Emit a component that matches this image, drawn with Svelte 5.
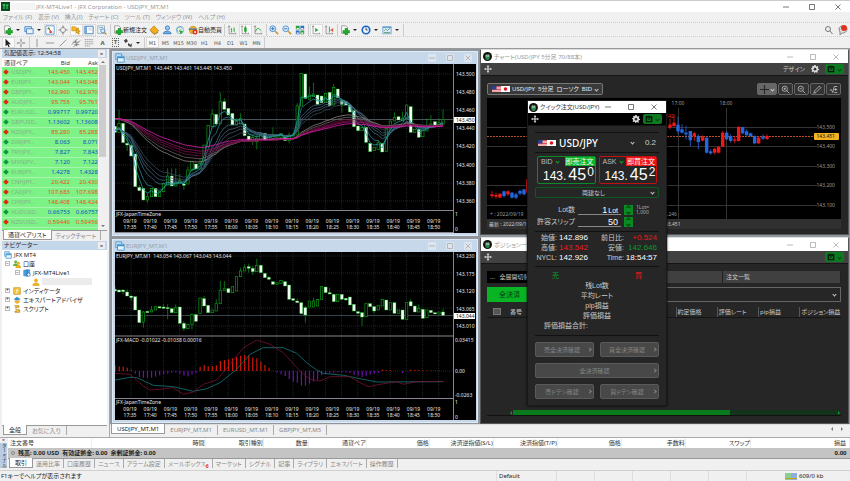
<script>
  const menus = ['ファイル (F)', '表示 (V)', '挿入(I)', 'チャート (C)', 'ツール (T)', 'ウィンドウ (W)', 'ヘルプ (H)'];

  const plus = '<path d="M6 4h3v2.500h2.500v3H9V12H6V9.500H3.500v-3H6z" fill="#1fae2c" stroke="#0c7a18" stroke-width=".5"/>';
  const page = '<path d="M2 1h5l2 2v7H2z" fill="#fff" stroke="#777" stroke-width=".8"/>';
  const axes = '<path d="M2.500 1v9.500H11M1.300 2.500l1.200-1.500 1.200 1.500M9.500 9.300l1.500 1.200" fill="none" stroke="#777" stroke-width=".8"/>';

  const icons = {
    newChart: page + plus,
    profiles: '<path d="M1 2h8v6H1z" fill="#cfe3f7" stroke="#3c7fc0"/><path d="M3 4.500h8v6H3z" fill="#e9f3fc" stroke="#3c7fc0"/>',
    market: '<path d="M1 1h10v10H1z" fill="#fff" stroke="#4a90d0"/><path d="M2.500 5l2-2.500L6.500 5z" fill="#2a9d3a"/><path d="M5 6l4 3.500H5.500z" fill="#e04020"/><path d="M4 4l4.500 4.500" stroke="#e04020"/>',
    dataWindow: '<circle cx="6" cy="6" r="3" fill="none" stroke="#888"/><path d="M6 .5v3M6 8.500v3M.5 6h3M8.500 6h3" stroke="#888" stroke-width="1.400"/>',
    navigator: '<path d="M1 2h4l1 1.500h3V7H1z" fill="#f5b921" stroke="#b97c08" stroke-width=".6"/><path d="M6 5l5 2.500-2 .5 1 2.500-1.500.5-1-2.500L6 10z" fill="#f5b921" stroke="#a06a00" stroke-width=".6"/>',
    terminal: '<path d="M1 1.500h10v9H1z" fill="#fff" stroke="#2b6cb5"/><path d="M1.500 2h2v8h-2z" fill="#5fa0e0"/><path d="M5 4h5M5 6h5" stroke="#bcd"/>',
    tester: '<path d="M1 1h8v9H1z" fill="#fff" stroke="#8aa"/><path d="M2.500 3h5M2.500 5h3" stroke="#7aa7d8"/><circle cx="7" cy="7" r="2.500" fill="#d6e9fa" stroke="#4a7fb5"/><path d="M9 9l2.300 2.300" stroke="#c08a30" stroke-width="1.500"/>',
    metaEditor: '<path d="M1 6l5-5 5.500 6L7 11z" fill="#f2b01e" stroke="#a86f06" stroke-width=".7"/><path d="M2 7.500l4.500 3.800L11 8.500" fill="none" stroke="#a87518"/>',
    community: '<circle cx="6.500" cy="3.500" r="2.500" fill="#9cc8f0" stroke="#2f78c0"/><path d="M1.500 10.500c0-4 9.500-4 9.500 0z" fill="#68aee8" stroke="#2f78c0"/>',
    signals: '<circle cx="6" cy="6" r="4.500" fill="#e4f4e4" stroke="#8cb4d0"/><path d="M3 8a3.500 3.500 0 0 1 6-4M5 8a2 2 0 0 1 3-2" fill="none" stroke="#5a9ac0"/><path d="M5 6.500l5 1-3 3.500z" fill="#2aa83a"/>',
    autoTrade: '<path d="M1.500 6c0-6 9-6 9 0L9 10H3z" fill="#f0b020" stroke="#a06a00" stroke-width=".6"/><path d="M1 5h10" stroke="#2f78c0" stroke-width="1.500"/><circle cx="8.500" cy="8.500" r="3" fill="#e03020"/><path d="M7.500 7.500h2v2h-2z" fill="#fff"/>',
    bars: axes + '<path d="M5.500 4v5M5.500 5h-1M8.500 3v5M8.500 7h1" stroke="#1a9a2a" fill="none"/>',
    candles: axes + '<path d="M5 3h3v5H5z" fill="#22b032"/><path d="M6.500 1v9" stroke="#1a9a2a"/>',
    line: axes + '<path d="M3 8c2-6 4-4 7-1" stroke="#1a9a2a" fill="none"/>',
    zoomIn: '<circle cx="4.500" cy="4.500" r="3.500" fill="#d8ecfb" stroke="#3c86cc"/><path d="M4.500 2.500v4M2.500 4.500h4" stroke="#2468b0"/><path d="M7.500 7.500l3.500 3.500" stroke="#c99a2a" stroke-width="2"/>',
    zoomOut: '<circle cx="4.500" cy="4.500" r="3.500" fill="#d8ecfb" stroke="#3c86cc"/><path d="M2.500 4.500h4" stroke="#2468b0"/><path d="M7.500 7.500l3.500 3.500" stroke="#c99a2a" stroke-width="2"/>',
    tile: '<path d="M1 1h4.500v4.500H1zM6.500 6.500H11V11H6.500z" fill="#2f9d3f"/><path d="M6.500 1H11v4.500H6.500zM1 6.500h4.500V11H1z" fill="#2f6fc0"/><path d="M2 3.500h2.500v1.500H2zM7.500 3.500H10v1.500H7.500zM2 9h2.500v1.500H2zM7.500 9H10v1.500H7.500z" fill="#fff"/>',
    scroll: axes + '<path d="M5 3.500l4 2.500-4 2.500z" fill="#22a832"/>',
    shift: axes + '<path d="M6.500 2v7" stroke="#666"/><path d="M11 3.500L7.500 6 11 8.500z" fill="#d06030"/>',
    indicators: page + plus,
    periods: '<circle cx="6" cy="6" r="4.500" fill="#eaf4ff" stroke="#1e66c8" stroke-width="2"/><path d="M6 3v3h2" stroke="#333" fill="none"/>',
    templates: '<path d="M1 2h10v8.500H1z" fill="#d8ecfb" stroke="#6a9fc8"/><path d="M1 3h10" stroke="#4a90d0"/><path d="M2.500 7l2-2 2 1.500L9.500 4M2.500 9h7" stroke="#5a9a5a" fill="none"/>',
    cursor: '<path d="M3 1v9l2.200-2 1.400 3 1.400-.7L6.500 7.500H9.500z" fill="#222"/>',
    cross: '<path d="M6 1v4M6 7v4M1 6h4M7 6h4" stroke="#666"/>',
    crossBold: '<path d="M6 0v12M0 6h12" stroke="#262626" stroke-width="1.500"/>',
    vline: '<path d="M6 1v10" stroke="#888"/>',
    hline: '<path d="M1 6h10" stroke="#888"/>',
    trend: '<path d="M2 10l8-8" stroke="#888"/>',
    channel: '<path d="M1 8l7-7M3 11l8-8M2 5h7M4 8h6M5 2l2 8" stroke="#666" stroke-width=".8"/>',
    fibo: '<path d="M1 2h10M1 4.500h10M1 7h10M1 9.500h6" stroke="#888" stroke-dasharray="1.500 .7"/>',
    arrows: '<path d="M1 3l3-2 2 3-3 2zM6 6l3 2 2-2-1 5-4-2z" fill="#444"/>',
    gear: '<path d="M5 0h2l.4 1.800 1.300.6L10.200 1.500l1 1.400-1 1.400.4 1.400L12 6v1.500l-1.700.4-.7 1.300.8 1.500-1.400.9-1.500-1-1 .4L6 12.500 5 12l-.4-1.600-1.300-.6-1.500.8-1-1.300 1-1.500L1.300 6.500 0 6V5l1.600-.6.6-1.200L1.500 2 3 1l1.300.9z" fill="#ddd"/><circle cx="6" cy="6.200" r="2" fill="#333"/>',
    move: '<path d="M6 0l2 2.500H6.800v2.700h2.700V4L12 6 9.500 8V6.800H6.800v2.700H8L6 12 4 9.500h1.200V6.800H2.500V8L0 6l2.500-2v1.200h2.700V2.500H4z" fill="#ddd"/>',
    cam: '<path d="M2 3h8v7H2z" fill="none" stroke="#031a08" stroke-width="2"/><path d="M3.500 2h5M4 6h4" stroke="#031a08" stroke-width="1.500"/>',
    lensPlus: '<circle cx="5" cy="5" r="3.500" fill="none" stroke="#ccc"/><path d="M5 3.500v3M3.500 5h3M7.500 7.500L11 11" stroke="#ccc"/>',
    lensMinus: '<circle cx="5" cy="5" r="3.500" fill="none" stroke="#ccc"/><path d="M3.500 5h3M7.500 7.500L11 11" stroke="#ccc"/>',
    pencil: '<path d="M1 11l1-3 6.500-6.500 2 2L4 10z" fill="none" stroke="#ccc"/>',
    wave: '<path d="M1 7l2-1 2 4 2-8h4M7 6h4M9 4v4M7 10h4" fill="none" stroke="#ccc"/>',
    globe: '<path d="M1 1h7v7H1z" fill="#cfe6f8" stroke="#3a8fd0"/><path d="M3 4h8v7H3z" fill="#e6f3fc" stroke="#3a8fd0"/><path d="M3 5.500h8" stroke="#3a8fd0" stroke-width="1.500"/>',
    people: '<circle cx="4" cy="3" r="2.200" fill="#5cb83a"/><path d="M0 9c0-5 7-5 8 0z" fill="#5cb83a"/><circle cx="8" cy="5" r="2.200" fill="#f2b01e"/><path d="M4 12c0-6 8-6 8 0z" fill="#f2b01e" stroke="#b97c08" stroke-width=".4"/>',
    server: '<path d="M1 2l5-1v10l-5-1zM6 1h4v8l-4 2z" fill="#4a9fe0" stroke="#1e66a8" stroke-width=".6"/><circle cx="8.500" cy="8.500" r="2.500" fill="#eaf4ff" stroke="#1e66a8"/>',
    user: '<circle cx="6" cy="3.500" r="2.800" fill="#f2b01e"/><path d="M1 11.500c0-6 10-6 10 0z" fill="#f2b01e" stroke="#b97c08" stroke-width=".4"/>',
    func: '<path d="M1 1h10v10H1z" fill="#f5c33a" stroke="#b97c08" stroke-width=".8"/><path d="M8 3c-3-1-2 3-2 6H4M4.500 5.500h3.500" stroke="#fff" fill="none"/>',
    hat: '<path d="M1 5l5-4 5.500 4L6 7z" fill="#3a8fd0"/><path d="M2.500 6v3c2 3 6 3 7.500 0V6L6 8z" fill="#f2b01e"/>',
    script: '<path d="M2 1h7v2.500H4.500V7H10v4H3V9h3" fill="#f5c33a" stroke="#a8740a" stroke-width=".9"/>'
  };

  const toolbar = [
    [{ icon: 'newChart', label: '新規チャート', caret: true }, { icon: 'profiles', label: 'プロファイル', caret: true },
     { icon: 'market', label: '気配値', on: true }, { icon: 'dataWindow', label: 'データウィンドウ' }, { icon: 'navigator', label: 'ナビゲーター', on: true },
     { icon: 'terminal', label: 'ターミナル', on: true }, { icon: 'tester', label: 'テスター' }],
    [{ icon: 'newChart', label: '新規注文', text: '新規注文' }, { icon: 'metaEditor', label: 'エディタ' }, { icon: 'community', label: 'コミュニティ' },
     { icon: 'signals', label: 'シグナル' }, { icon: 'autoTrade', label: '自動売買', text: '自動売買' }],
    [{ icon: 'bars', label: 'バー' }, { icon: 'candles', label: 'ローソク足', on: true }, { icon: 'line', label: 'ライン' }],
    [{ icon: 'zoomIn', label: '拡大' }, { icon: 'zoomOut', label: '縮小' }, { icon: 'tile', label: '整列' }],
    [{ icon: 'scroll', label: '自動スクロール', on: true }, { icon: 'shift', label: 'チャートシフト' }],
    [{ icon: 'indicators', label: 'インディケータ', caret: true }, { icon: 'periods', label: '時間足', caret: true }, { icon: 'templates', label: '定型チャート', caret: true }]
  ];
  const drawTools = [['cursor', 'cross'], ['vline', 'hline', 'trend', 'channel', 'fibo']];
  const frames = ['M1', 'M5', 'M15', 'M30', 'H1', 'H4', 'D1', 'W1', 'MN'];

  const quotes = [
    ['USDJPY..', '143.450', '143.452', 0], ['EURJPY..', '143.044', '143.048', 0], ['GBPJPY..', '162.960', '162.970', 0],
    ['AUDJPY..', '95.755', '95.761', 0], ['EURUSD..', '0.99717', '0.99720', 1], ['GBPUSD..', '1.13602', '1.13608', 1],
    ['NZDJPY..', '85.280', '85.288', 0], ['ZARJPY..', '8.063', '8.071', 1], ['TRYJPY..', '7.827', '7.843', 1],
    ['MXNJPY..', '7.120', '7.122', 1], ['RUBJPY..', '1.4278', '1.4328', 1], ['CNHJPY..', '20.422', '20.430', 0],
    ['CADJPY..', '107.683', '107.698', 0], ['CHFJPY..', '148.408', '148.424', 0], ['AUDUSD..', '0.66753', '0.66757', 1],
    ['NZDUSD..', '0.59446', '0.59456', 0], ['EURGBP..', '0.87772', '0.87790', 0]
  ];

  const tree = [
    { depth: 0, icon: 'globe', text: 'JFX MT4' },
    { depth: 1, icon: 'people', text: '口座', sign: '−' },
    { depth: 2, icon: 'server', text: 'JFX-MT4Live1', sign: '−' },
    { depth: 3, icon: 'user', text: '' },
    { depth: 1, icon: 'func', text: 'インディケータ', sign: '+' },
    { depth: 1, icon: 'hat', text: 'エキスパートアドバイザ', sign: '+' },
    { depth: 1, icon: 'script', text: 'スクリプト', sign: '+' }
  ];

  // open close [high low], thirds of a pixel from the top of the pane
  const usd = parse(`229 247|247 220 180|220 278|280 285 250 303|286 318|312 410|412 422 405|415 450|450 440 430 458|440 415|415 440|440 425|425 400|405 378 355
    |378 408 355|408 398 355|400 392 372|402 406 392 420|402 360 350|362 335|342 357|357 340 325|345 285|290 226|230 192 178|193 222|222 155 127|155 178 145|175 195
    |190 225|225 215 205|222 205 190|222 257|258 270|270 262 255 285|275 265 255 298|268 252|250 270|272 262|265 255 232|262 256|262 250|262 272|272 255 247 280|258 252
    |255 168 160|168 70|72 145|148 135 110|140 132 98|135 163|138 158|158 130|127 167|165 112 102|117 143|152 163 148 188|155 165|165 186|182 230|228 242|242 232
    |232 277|280 305|302 292|298 278 270|280 306|304 235|237 213|213 203 187|200 210|212 205 185|205 165|170 247|247 238|238 262|260 240|243 232 205|228 222 195
    |215 228|228 218 205|222 208 178`, 14);
  const eur = parse(`160 165 150|162 168|162 167 160 175|168 180 160|180 185 178 195|182 222|222 260|258 228 225 275|226 230|228 222 210|222 212|212 216|213 217 205|215 218 205 250
    |218 230|230 215 205|213 262|262 277 255 285|278 265|265 235 232 280|236 256|232 186|188 210 180|208 230|230 222|225 203 190|203 163 135|163 158 135|158 170|170 152
    |165 122|122 105 95|105 95 85|92 97 83 110|97 107 90 117|107 88 68|88 110|112 125|124 130 120|137 145|145 140|142 133|137 150|147 190|188 193|195 200 188|200 233
    |215 237 210 260|213 195|213 195 185|210 190|190 152|153 170|170 174 155|175 197|197 175|175 190|187 192|183 207|205 225|227 232|230 243 228 270|242 203
    |203 212|212 225 210 232|222 208|210 190|192 222|222 200|200 232|232 222|222 250|250 200|197 210 190|210 228|228 217 205|220 247|245 222|223 230|230 234|234 228|228 238 218`, 16);

  function parse(text, top) {
    return text.split('|').map((part, i) => {
      const [o, c, h, l] = part.trim().split(/\s+/).map(Number);
      const y = (v) => v / 3 - top;
      return {
        x: i * 4.05,
        open: y(o),
        close: y(c),
        high: y(Math.min(o, c, h ?? 999)),
        low: y(Math.max(o, c, l ?? 0))
      };
    });
  }

  function ema(data, period, seed) {
    let value = seed;
    const k = 2 / (period + 1);
    return data.map((d) => {
      value += (d.close - value) * k;
      return `${d.x.toFixed(1)},${value.toFixed(1)}`;
    }).join(' ');
  }

  const averages = [
    [15, '#33495c'], [12, '#3d566c'], [10, '#44607a'], [8, '#3f6d86'], [5, '#2f8090'], [3, '#1fa0a0']
  ].map(([p, color]) => ({ color, points: ema(usd, p, 66) })).concat(
    [[30, '#8a8480'], [35, '#6a6262'], [40, '#6a1040'], [45, '#7a1048'], [50, '#981468'], [60, '#e020b0']]
      .map(([p, color]) => ({ color, points: ema(usd, p, 54) }))
  );

  const histogram = [16, 14, 13, 10, 4, -8, -18, -20, -20, -20, -17, -13, -10, -7, -5, -4, -8, -14, -16, -10, -6, 12, 18, 14, 15, 17, 30, 33, 35, 38, 42, 46, 48, 47, 40, 38, 28, 18, 10, 1,
    -4, -10, -15, -24, -32, -35, -44, -44, -38, -32, -26, -12, -8, -6, -5, -4, -4, -4, -6, -12, -14, -18, -14, -10, -8, -6, 4, 2, 3, 0, 0, -6, 0, 4, 3, 3, 2, 1, 1, 1, 1];
  const macdLine = curve([15, 412, 60, 415, 100, 450, 120, 462, 150, 460, 190, 455, 220, 475, 250, 468, 280, 445, 320, 432, 360, 385, 400, 335, 440, 312, 480, 325, 520, 350, 570, 405,
    600, 430, 630, 435, 660, 422, 720, 422, 750, 440, 775, 452, 810, 445, 860, 437, 880, 445, 920, 437, 1000, 436]);
  const signalLine = curve([15, 432, 60, 424, 80, 425, 130, 448, 190, 452, 250, 466, 290, 458, 330, 440, 380, 400, 420, 355, 460, 335, 520, 335, 560, 352, 590, 380, 620, 402, 640, 412,
    700, 418, 760, 430, 800, 438, 1000, 437]);

  function curve(list) {
    const out = [];
    for (let i = 0; i < list.length; i += 2) out.push(`${(list[i] / 3 - 5).toFixed(1)},${(list[i + 1] / 3 - 16).toFixed(1)}`);
    return out.join(' ');
  }

  const times = Array.from({ length: 16 }, (_, i) => {
    const m = 17 * 60 + 35 + i * 5;
    return { x: 15 + i * 20.25, text: `${Math.floor(m / 60)}:${String(m % 60).padStart(2, '0')}` };
  });
  const gridX = Array.from({ length: 20 }, (_, i) => 16 + i * 16.2);

  // x top bottom high low up
  const fiveMin = [
    [36, 445, 450, 435, 456, 1], [48, 447, 452, 440, 458, 1], [60, 443, 455, 443, 455, 1], [72, 436, 450, 434, 455, 0], [84, 436, 445, 432, 450, 1], [96, 440, 455, 438, 457, 0],
    [108, 445, 455, 440, 460, 0], [120, 435, 443, 430, 448, 0], [132, 430, 445, 430, 448, 0], [143, 400, 440, 395, 442, 1],
    [570, 236, 245, 218, 250, 1], [582, 230, 240, 205, 245, 1], [594, 236, 256, 212, 265, 0], [606, 250, 260, 235, 262, 0], [618, 260, 265, 240, 280, 0], [631, 255, 283, 255, 300, 0],
    [643, 262, 270, 258, 285, 1], [655, 270, 288, 265, 310, 0], [668, 272, 284, 268, 286, 1], [680, 275, 320, 275, 322, 0], [692, 316, 322, 310, 326, 0], [704, 308, 320, 305, 326, 1],
    [716, 303, 320, 300, 322, 1], [728, 260, 302, 255, 303, 1], [740, 260, 280, 255, 282, 0], [752, 270, 285, 265, 290, 0], [764, 280, 284, 270, 292, 1], [776, 243, 285, 240, 287, 1],
    [788, 243, 262, 243, 265, 0], [800, 256, 268, 250, 268, 0], [812, 262, 270, 260, 272, 0], [824, 270, 292, 268, 295, 0], [836, 275, 292, 272, 294, 1], [849, 272, 278, 265, 282, 0], [861, 270, 279, 265, 282, 1]
  ].map(([x, t, b, h, l, up]) => ({ x: x / 3 - 7, top: t / 3 - 52, bottom: b / 3 - 52, high: h / 3 - 52, low: l / 3 - 52, color: up ? '#f01818' : '#2468e0' }));

  const chartTabs = ['USDJPY_MT,M1', 'EURJPY_MT,M1', 'EURUSD_MT,M1', 'GBPJPY_MT,M5'];
  const columns = [['注文番号', 83], ['時間', 114], ['取引種別', 58], ['数量', 45], ['通貨ペア', 58], ['価格', 63], ['決済逆指値(S/L)', 64], ['決済指値(T/P)', 64], ['価格', 64], ['手数料', 64], ['スワップ', 65], ['損益', 99]];
  const termTabs = ['取引', '運用比率', '口座履歴', 'ニュース', 'アラーム設定', 'メールボックス', 'マーケット', 'シグナル', '記事', 'ライブラリ', 'エキスパート', '操作履歴'];
</script>

{#snippet icon(name)}
  <svg class="icon" viewBox="0 0 12 12" aria-hidden="true">{@html icons[name]}</svg>
{/snippet}

{#snippet flags()}
  <svg class="flags" viewBox="0 0 18 6" aria-hidden="true">
    <rect width="9" height="6" fill="#fff" />
    <path d="M0 .5h9M0 2h9M0 3.500h9M0 5h9" stroke="#d8222c" stroke-width=".8" />
    <rect width="4.500" height="3.500" fill="#27408f" />
    <rect x="9" width="9" height="6" fill="#fff" />
    <circle cx="13.500" cy="3" r="1.800" fill="#e01020" />
  </svg>
{/snippet}

{#snippet logo()}
  <svg class="logo" viewBox="0 0 12 12" aria-hidden="true">
    <circle cx="6" cy="6" r="6" fill="#111" />
    <path d="M3 3.500h6v4a3 3 0 0 1-6 0z" fill="#2b8a4a" />
    <path d="M3.500 5.500h5M5 3v3M7 3v3" stroke="#d8e8dc" stroke-width=".8" />
  </svg>
{/snippet}

{#snippet winButtons(dim)}
  <span class="winbtns" class:dim>
    <button aria-label="最小化"><svg viewBox="0 0 8 8"><path d="M1 4h6" /></svg></button>
    <button aria-label="最大化"><svg viewBox="0 0 8 8"><path d="M1.500 1.500h5v5h-5z" /></svg></button>
    <button aria-label="閉じる"><svg viewBox="0 0 8 8"><path d="M1.500 1.500l5 5M6.500 1.500l-5 5" /></svg></button>
  </span>
{/snippet}

{#snippet candles(data)}
  {#each data as d}
    <path d="M{d.x} {d.high}V{d.low}" stroke="#0a8a18" stroke-width=".8" />
    {#if d.close > d.open}
      <rect x={d.x - 1.5} y={d.open} width="3" height={Math.max(1, d.close - d.open)} fill="#f4fff4" stroke="#10c020" stroke-width=".4" />
    {:else}
      <rect x={d.x - 1.2} y={d.close} width="2.4" height={Math.max(1, d.open - d.close)} fill="#000" stroke="#0a9a18" stroke-width=".7" />
    {/if}
  {/each}
{/snippet}

{#snippet timeAxis(y)}
  <text x="1" y={y - 7}>JFX-JapanTimeZone</text>
  {#each times as t}
    <text x={t.x} {y} text-anchor="middle">09/19</text>
    <text x={t.x} y={y + 6} text-anchor="middle">{t.text}</text>
  {/each}
{/snippet}

{#snippet mdiTitle(text)}
  <header class="mdi-title">
    {@render icon('globe')}
    <span>{text}</span>
    {@render winButtons(true)}
  </header>
{/snippet}

{#snippet strip(label)}
  <div class="strip">
    {@render icon('move')}
    <span class="grow"></span>
    {#if label}
      <span>{label}</span>
      {@render icon('gear')}
    {/if}
    <button class="cam" aria-label="カメラ">{@render icon('cam')}<i class="chev"></i></button>
  </div>
{/snippet}

<div class="app">
  <header class="titlebar">
    <svg class="app-icon" viewBox="0 0 9 9" aria-hidden="true">
      <rect width="9" height="9" fill="#0a4a1c" />
      <path d="M1.500 3h3M3 2v5M5 3h2.500M6 3v4" stroke="#3fe070" fill="none" />
    </svg>
    <span class="masked"></span>
    <span>JFX-MT4Live1 - JFX Corporation - USDJPY_MT,M1</span>
    {@render winButtons(false)}
  </header>

  <nav class="menu">
    {#each menus as m}<button>{m}</button>{/each}
  </nav>

  <div class="toolbar">
    {#each toolbar as group}
      <div class="group">
        {#each group as t}
          <button class="tool" class:on={t.on} aria-label={t.label}>
            {@render icon(t.icon)}
            {#if t.text}<span>{t.text}</span>{/if}
            {#if t.caret}<i class="caret"></i>{/if}
          </button>
        {/each}
      </div>
    {/each}
    <span class="grow"></span>
    <svg class="search" viewBox="0 0 24 12" aria-hidden="true">
      <circle cx="4" cy="5" r="2.500" fill="none" stroke="#777" />
      <path d="M6 7l2.500 3" stroke="#777" />
      <path d="M15 5c0-4 8-4 8 0s-4 4-5 4l-2 2v-3z" fill="#ddd" stroke="#888" />
      <circle cx="20" cy="4" r="3" fill="#e03020" />
    </svg>
  </div>

  <div class="toolbar low">
    {#each drawTools as group}
      <div class="group">
        {#each group as name}
          <button class="tool" class:on={name === 'cursor'} aria-label={name}>{@render icon(name)}</button>
        {/each}
        {#if group.length > 2}
          <button class="tool letter">A</button>
          <button class="tool letter"><span class="boxed">T</span></button>
          <button class="tool" aria-label="arrows">{@render icon('arrows')}<i class="caret"></i></button>
        {/if}
      </div>
    {/each}
    <div class="group">
      {#each frames as f}
        <button class="tool letter" class:on={f === 'M1'}>{f}</button>
      {/each}
    </div>
  </div>

  <main>
    <aside>
      <section class="panel watch">
        <h2><span>気配値表示: 12:54:58</span><button aria-label="閉じる">×</button></h2>
        <div class="scroller">
          <table class="quotes">
            <thead><tr><th>通貨ペア</th><th>Bid</th><th>Ask</th></tr></thead>
            <tbody>
              {#each quotes as [name, bid, ask, up]}
                <tr class:up={up === 1}>
                  <td><i class="mark"></i>{name}</td><td>{bid}</td><td>{ask}</td>
                </tr>
              {/each}
            </tbody>
          </table>
          <div class="vbar"><i class="tri"></i><b></b><i class="tri down"></i></div>
        </div>
        <div class="tabs"><button class="on">通貨ペアリスト</button><button>ティックチャート</button></div>
      </section>

      <section class="panel navi">
        <h2><span>ナビゲーター</span><button aria-label="閉じる">×</button></h2>
        <ul>
          {#each tree as n}
            <li class="d{n.depth}">
              {#if n.sign}<span class="sign">{n.sign}</span>{/if}
              {@render icon(n.icon)}
              {#if n.text}<span>{n.text}</span>{:else}<span class="masked wide"></span>{/if}
            </li>
          {/each}
        </ul>
        <div class="tabs"><button class="on">全般</button><button>お気に入り</button></div>
      </section>
    </aside>

    <div class="desk">
      <div class="mdi">
        <div class="col charts">
          <article class="chart">
            {@render mdiTitle('USDJPY_MT,M1')}
            <svg class="plot" viewBox="0 0 361 169">
              <rect width="361" height="169" fill="#000" />
              {#each gridX as x}<path class="grid" d="M{x} 0V146" />{/each}
              {#each [10, 28, 46, 64, 83, 101, 119, 137] as y}<path class="grid" d="M0 {y}H338" />{/each}
              <path d="M0 55.500H338" stroke="#4c5358" />
              {@render candles(usd)}
              {#each averages as a}
                <polyline points={a.points} fill="none" stroke={a.color} stroke-width=".8" />
              {/each}
              <path d="M338.500 0V169M0 146.500H338M0 168.500H338" stroke="#8c8490" />
              <text x="1" y="6">USDJPY_MT,M1&nbsp; 143.445 143.461 143.445 143.450</text>
              {#each ['143.500', '143.480', '143.460', '143.440', '143.420', '143.400', '143.380', '143.360'] as p, i}
                <text x="341" y={12 + i * 18.1}>{p}</text>
              {/each}
              <rect x="339" y="53" width="21" height="6" fill="#fff" />
              <text x="341" y="58" class="inv">143.450</text>
              <text x="340" y="152">1</text><text x="340" y="167">0</text>
              {@render timeAxis(159)}
            </svg>
          </article>

          <article class="chart">
            {@render mdiTitle('EURJPY_MT,M1')}
            <svg class="plot" viewBox="0 0 361 168">
              <rect width="361" height="168" fill="#000" />
              {#each gridX as x}<path class="grid" d="M{x} 0V146" />{/each}
              {#each [4, 21, 39, 56, 74, 119] as y}<path class="grid" d="M0 {y}H338" />{/each}
              <path d="M0 63.500H338" stroke="#39444a" />
              {@render candles(eur)}
              {#each histogram as h, i}
                <rect x={i * 4.05 - 0.5} y={119 - Math.max(0, h) / 3} width="1.200" height={Math.abs(h) / 3} fill={h > 0 ? '#d01808' : '#6a10b0'} />
              {/each}
              <polyline points={signalLine} fill="none" stroke="#147878" stroke-width=".8" />
              <polyline points={macdLine} fill="none" stroke="#7a1034" stroke-width=".8" />
              <path d="M338.500 0V168M0 84H338M0 146.500H338" stroke="#8c8490" />
              <text x="1" y="6">EURJPY_MT,M1&nbsp; 143.054 143.067 143.043 143.044</text>
              <text x="1" y="90">JFX-MACD -0.01022 -0.01038 0.00016</text>
              {#each ['143.230', '143.175', '143.120', '143.065', '143.010'] as p, i}
                <text x="341" y={6 + i * 17.6}>{p}</text>
              {/each}
              <rect x="339" y="61" width="21" height="6" fill="#fff" />
              <text x="341" y="66" class="inv">143.044</text>
              <text x="340" y="90">0.03415</text><text x="340" y="121">0.00</text><text x="340" y="145">-0.0263</text>
              <text x="340" y="152">1</text><text x="340" y="167">0</text>
              {@render timeAxis(159)}
            </svg>
          </article>
        </div>

        <div class="col jfx">
          <article class="win">
            <header class="win-title">{@render logo()}<span>チャート(USD/JPY 5分足 70/88本)</span>{@render winButtons(true)}</header>
            {@render strip('デザイン')}
            <div class="win-body">
              <div class="chart-tools">
                <label class="pair-select">
                  {@render flags()}
                  <select aria-label="チャート設定"><option>USD/JPY&nbsp; 5分足&nbsp; ローソク&nbsp; BID</option></select>
                  <i class="chev"></i>
                </label>
                <span class="grow"></span>
                <button class="lit" aria-label="クロス">{@render icon('crossBold')}<i class="chev"></i></button>
                <button aria-label="拡大">{@render icon('lensPlus')}</button>
                <button aria-label="縮小">{@render icon('lensMinus')}</button>
                <button aria-label="描画">{@render icon('pencil')}</button>
                <button aria-label="指標">{@render icon('wave')}</button>
              </div>
              <svg class="plot" viewBox="0 0 354 121">
                <rect width="354" height="121" fill="#000" />
                {#each [29, 48, 68, 87, 107] as y, i}
                  <path d="M0 {y + 0.5}H330" stroke="#333" />
                  <text class="jt" x="348" y={y + 2} text-anchor="end">143.{5 - i}00</text>
                {/each}
                {#each [[46, '16:00'], [191, '17:00'], [239, '18:00']] as [x, t]}
                  <path d="M{x + 0.5} 10V121" stroke="#333" />
                  <text class="jt" {x} y="7" text-anchor="middle">{t}</text>
                {/each}
                <path d="M0 38.500H330" stroke="#b8502c" stroke-dasharray="2 1" />
                {#each fiveMin as c}
                  <path d="M{c.x} {c.high}V{c.low}" stroke={c.color} stroke-width=".8" />
                  <rect x={c.x - 1.7} y={c.top} width="3.400" height={c.bottom - c.top} fill={c.color} />
                {/each}
                <text x="187" y="20" text-anchor="end" class="jt red">143.542</text>
                <rect x="327" y="35" width="25" height="7" rx="1" fill="#f5b324" />
                <text x="348" y="40" text-anchor="end" class="inv">143.451</text>
                <text class="jt" x="3" y="118">+ : 2022/09/19</text>
                <text class="jt" x="190" y="118" text-anchor="end">143.246</text>
              </svg>
              <div class="latest"><span>最新 : 2022/09/19</span><span>143.451</span></div>
            </div>
          </article>

          <article class="win positions">
            <header class="win-title">{@render logo()}<span>ポジション一覧</span>{@render winButtons(true)}</header>
            {@render strip('')}
            <div class="win-body">
              <div class="ptabs">
                <button class="dark">...&nbsp;&nbsp; 全展開切替</button><button aria-label="一覧"></button><button>注文一覧</button>
              </div>
              <div class="prow">
                <button class="close-all">全決済</button>
                <label class="psel"><select aria-label="絞り込み"><option></option></select><i class="chev"></i></label>
              </div>
              <table class="ptable">
                <thead>
                  <tr>
                    <th class="c0"><input type="checkbox" aria-label="すべて選択" /></th><th class="c1">番号</th>
                    <th>約定価格</th><th>評価レート</th><th>pip損益</th><th>ポジション損益</th>
                  </tr>
                </thead>
              </table>
              <div class="hbar"><i class="tri left"></i><span><b></b></span><i class="tri right"></i></div>
            </div>
          </article>

          <article class="order">
            <header class="win-title">{@render logo()}<span>クイック注文(USD/JPY)</span>{@render winButtons(false)}</header>
            <div class="strip black">
              {@render icon('move')}<span class="grow"></span>{@render icon('gear')}
              <button class="cam" aria-label="カメラ">{@render icon('cam')}<i class="chev"></i></button>
            </div>
            <div class="form">
              <div class="pair">
                {@render flags()}
                <select aria-label="通貨ペア"><option>USD/JPY</option></select>
                <i class="chev"></i><span class="spread">0.2</span>
              </div>
              <div class="two rates">
                <button class="rate bid">
                  <span class="top"><span>BID</span><i class="chev g"></i><em>即売注文</em></span>
                  <span class="num">143.<b>45</b><sup>0</sup></span>
                </button>
                <button class="rate ask">
                  <span class="top"><span>ASK</span><i class="chev g"></i><em>即買注文</em></span>
                  <span class="num">143.<b>45</b><sup>2</sup></span>
                </button>
              </div>
              <label class="hedge"><select aria-label="両建"><option>両建なし</option></select><i class="chev"></i></label>
              <div class="field">
                <label for="lot">Lot数</label>
                <span class="box"><input id="lot" value="1" />Lot</span>
                <button class="spin" aria-label="Lot増減"><i class="chev u"></i><i class="chev"></i></button>
                <small>1Lot=<br />1,000</small>
              </div>
              <div class="field">
                <label for="slip">許容スリップ</label>
                <span class="box"><input id="slip" value="50" /></span>
                <button class="spin" aria-label="スリップ増減"><i class="chev u"></i><i class="chev"></i></button>
              </div>
              <dl class="stats">
                <dt>始値:</dt><dd>142.896</dd><dt>前日比:</dt><dd class="r">+0.524</dd>
                <dt>高値:</dt><dd class="r">143.542</dd><dt>安値:</dt><dd class="gr">142.646</dd>
                <dt>NYCL:</dt><dd>142.926</dd><dt>Time:</dt><dd>18:54:57</dd>
              </dl>
              <div class="sum">
                <p class="sides"><span class="gr">売</span><span class="r">買</span></p>
                <p>残Lot数</p>
                <p>平均レート</p>
                <p>pip損益</p>
                <p>評価損益</p>
                <p class="total">評価損益合計:</p>
              </div>
              <div class="confirm">
                <button>売全決済確認<i></i></button><button>買全決済確認<i></i></button>
                <button class="full">全決済確認<i></i></button>
                <button>売ドテン確認<i></i></button><button>買ドテン確認<i></i></button>
              </div>
            </div>
          </article>
        </div>
      </div>

      <div class="tabs chart-tabs">
        {#each chartTabs as t, i}<button class:on={i === 0}>{t}</button>{/each}
        <span class="grow"></span><i class="tri left"></i><i class="tri right"></i>
      </div>
    </div>
  </main>

  <section class="terminal">
    <div class="rail"><button aria-label="閉じる">×</button><span>ターミナル</span></div>
    <div class="term-main">
      <table>
        <colgroup>{#each columns as c}<col style="width: {c[1] / 8.41}%" />{/each}</colgroup>
        <thead><tr>{#each columns as c}<th>{c[0]}</th>{/each}</tr></thead>
        <tbody>
          <tr><td colspan="11"><i class="dot"></i>残高: 0.00 USD&nbsp; 有効証拠金: 0.00&nbsp; 余剰証拠金: 0.00</td><td>0.00</td></tr>
        </tbody>
      </table>
      <div class="tabs">
        {#each termTabs as t, i}
          <button class:on={i === 0}>{t}{#if t === 'メールボックス'}<sub>6</sub>{/if}</button>
        {/each}
      </div>
    </div>
  </section>

  <footer class="status">
    <span class="help">F1キーでヘルプが表示されます</span>
    <span class="profile">Default</span>
    <span></span><span></span><span></span><span></span><span></span>
    <span class="net">
      <svg viewBox="0 0 12 7" aria-hidden="true">
        <path d="M1 0v7M3 0v7M5 0v7" stroke="#2aa838" /><path d="M7 0v7M9 0v7M11 0v7" stroke="#2f6fc0" />
        <path d="M0 5.500h12" stroke="#c8a020" />
      </svg>
      609/0 kb
    </span>
  </footer>
</div>

<style>
  :global(body) {
    margin: 0;
    background: #f0f0f0;
  }

  .app {
    font: 6px/8px "Noto Sans", "Noto Sans CJK JP", sans-serif;
    font-feature-settings: "palt";
    color: #333;
    background: #f0f0f0;
    display: flex;
    flex-direction: column;
  }

  .app * {
    box-sizing: border-box;
  }

  button, select, input {
    font: inherit;
    font-feature-settings: inherit;
    color: inherit;
    background: none;
    border: 0;
    margin: 0;
    padding: 0;
    border-radius: 0;
    white-space: nowrap;
  }

  select {
    appearance: none;
  }

  h2, ul, p, dl, dd {
    margin: 0;
    padding: 0;
    font-weight: normal;
    list-style: none;
  }

  table {
    border-collapse: collapse;
    table-layout: fixed;
    width: 100%;
  }

  th, td {
    padding: 0;
    font-weight: normal;
    white-space: nowrap;
  }

  .grow {
    flex: 1;
  }

  .icon {
    width: 10px;
    height: 10px;
    flex: none;
  }

  .flags {
    width: 18px;
    height: 6px;
    flex: none;
  }

  .logo {
    width: 9px;
    height: 9px;
    flex: none;
  }

  .caret {
    border: 2px solid transparent;
    border-top-color: #222;
    border-bottom: 0;
    margin-left: 3px;
  }

  .chev {
    width: 3px;
    height: 3px;
    flex: none;
    border: solid #ccc;
    border-width: 0 1px 1px 0;
    transform: rotate(45deg);
  }

  .chev.u {
    transform: rotate(225deg);
  }

  .tri {
    border: 2px solid transparent;
    border-bottom-color: #777;
    border-top: 0;
    width: 0;
  }

  .tri.down {
    transform: rotate(180deg);
  }

  .tri.left {
    transform: rotate(-90deg);
  }

  .tri.right {
    transform: rotate(90deg);
  }

  .masked {
    width: 24px;
    height: 7px;
    background: #f4f4f4;
  }

  .masked.wide {
    width: 50px;
    background: #ececec;
  }

  .titlebar {
    display: flex;
    align-items: center;
    gap: 1px;
    height: 12px;
    padding-left: 1px;
    background: #fff;
    border-top: 1px solid #ccc;
    color: #999;
  }

  .app-icon {
    width: 9px;
    height: 9px;
  }

  .winbtns {
    display: flex;
    gap: 15px;
    margin-left: auto;
    padding-right: 8px;
  }

  .winbtns button {
    width: 8px;
    height: 8px;
    line-height: 0;
  }

  .winbtns svg {
    width: 8px;
    height: 8px;
    fill: none;
    stroke: #555;
    stroke-width: 0.8;
  }

  .winbtns.dim svg {
    stroke: #aaa;
  }

  .titlebar .winbtns {
    gap: 18px;
  }

  .menu {
    display: flex;
    gap: 6px;
    height: 10px;
    padding-left: 3px;
    color: #999;
  }

  .toolbar {
    display: flex;
    align-items: center;
    height: 14px;
    padding-left: 2px;
    border-top: 1px dotted #ccc;
  }

  .toolbar.low {
    height: 12px;
  }

  .toolbar.low .tool {
    height: 11px;
  }

  .group {
    display: flex;
    padding-right: 1px;
    margin-right: 1px;
    border-right: 1px solid #ccc;
  }

  .tool {
    display: flex;
    align-items: center;
    min-width: 13px;
    height: 12px;
    padding: 0 1px;
    color: #222;
  }

  .tool.on {
    background: #fafafa;
    box-shadow: inset 0 0 0 1px #ddd;
  }

  .tool .caret {
    margin-right: 2px;
  }

  .letter {
    justify-content: center;
    color: #555;
    font-weight: bold;
  }

  .group:last-child .letter {
    font: 5px "DejaVu Sans", sans-serif;
  }

  .boxed {
    border: 1px dotted #666;
    line-height: 7px;
    padding: 0 1px;
  }

  .search {
    width: 24px;
    height: 12px;
    margin-right: 2px;
  }

  main {
    display: grid;
    grid-template-columns: 110px 1fr;
    border-top: 1px solid #999;
  }

  aside {
    display: flex;
    flex-direction: column;
    padding: 0 2px;
    border-right: 1px solid #aaa;
  }

  .panel h2 {
    display: flex;
    justify-content: space-between;
    height: 9px;
    padding: 0 2px;
    font-size: 6px;
    line-height: 9px;
    color: #223;
    background: #c4d6ea;
  }

  .panel h2 button {
    background: #eee;
    line-height: 6px;
    height: 7px;
    width: 7px;
    margin-top: 1px;
  }

  .scroller {
    display: flex;
    max-height: 172px;
    overflow: hidden;
    background: #fff;
  }

  .quotes th {
    height: 9px;
    text-align: right;
  }

  .quotes th:first-child {
    text-align: left;
    padding-left: 2px;
    width: 40px;
  }

  .quotes th:nth-child(2) {
    width: 28px;
  }

  .quotes tbody tr {
    height: 10px;
    background: #7cf287;
    color: #e8501c;
    border-bottom: 1px solid #a9f5ae;
  }

  .quotes td {
    text-align: right;
    height: 10px;
    line-height: 8px;
  }

  .quotes td:first-child {
    text-align: left;
    color: #85b389;
  }

  .quotes .up {
    color: #1450c8;
  }

  .mark {
    display: inline-block;
    width: 4px;
    height: 4px;
    margin: 0 3px 0 2px;
    background: #e02810;
    transform: rotate(45deg);
  }

  .up .mark {
    background: #0c9a3c;
  }

  .vbar {
    width: 9px;
    flex: none;
    display: flex;
    flex-direction: column;
    align-items: center;
    gap: 2px;
    padding: 3px 0;
    background: #f0f0f0;
  }

  .vbar b {
    width: 7px;
    flex: 0 0 92px;
    background: #cdcdcd;
  }

  .vbar .down {
    margin-top: auto;
  }

  .tabs {
    display: flex;
    color: #888;
    height: 10px;
    padding-left: 1px;
    border-top: 1px solid #999;
  }

  .tabs button {
    padding: 0 5px;
    border-right: 1px solid #aaa;
    line-height: 8px;
  }

  .tabs .on {
    margin-top: -1px;
    background: #fff;
    color: #222;
    border: 1px solid #999;
    border-top: 0;
  }

  .watch .tabs button {
    padding: 0 4px;
  }

  .navi {
    flex: 1;
    display: flex;
    flex-direction: column;
    margin-top: 1px;
    padding-bottom: 2px;
  }

  .navi ul {
    flex: 1;
    padding: 0 2px;
    background: #fff;
  }

  .navi li {
    display: flex;
    align-items: center;
    gap: 2px;
    height: 9px;
    color: #222;
  }

  .navi .icon {
    width: 8px;
    height: 8px;
  }

  .d1 { padding-left: 1px; }
  .d2 { padding-left: 11px; }
  .d3 { padding-left: 28px; }

  .sign {
    width: 5px;
    height: 5px;
    border: 1px solid #bbb;
    font-size: 5px;
    line-height: 3px;
    text-align: center;
    margin-right: 1px;
  }

  .mdi {
    display: grid;
    grid-template-columns: 1fr 1fr;
    background: #8f959c;
  }

  .col {
    display: flex;
    flex-direction: column;
    gap: 3px;
    padding: 2px 2px 1px;
    min-width: 0;
  }

  .chart {
    background: #c6d8ea;
    border: 1px solid #dfeaf5;
    padding: 0 1px 2px 2px;
  }

  .mdi-title {
    display: flex;
    align-items: center;
    gap: 1px;
    height: 12px;
    color: #98a0a8;
  }

  .mdi-title .winbtns {
    gap: 10px;
    padding-right: 4px;
  }

  .mdi-title .winbtns button {
    background: #dbe6f1;
  }

  .plot {
    display: block;
    width: 100%;
    font: 5px "Noto Sans", sans-serif;
    fill: #e8e8e8;
  }

  .grid {
    stroke: #24383a;
    stroke-width: 0.7;
    stroke-dasharray: 1 1;
  }

  .plot .inv {
    fill: #111;
  }

  .jt {
    fill: #999;
  }

  .jt.red {
    fill: #e02020;
  }

  .jfx {
    position: relative;
    padding: 0 1px 0 0;
    gap: 2px;
  }

  .win {
    background: #262626;
    color: #ccc;
    border: 1px solid #555;
    border-top-color: #ddd;
  }

  .positions {
    flex: 1;
    display: flex;
    flex-direction: column;
  }

  .win-title {
    display: flex;
    align-items: center;
    gap: 2px;
    height: 13px;
    padding-left: 2px;
    background: #fff;
    color: #999;
  }

  .strip {
    display: flex;
    align-items: center;
    gap: 6px;
    height: 13px;
    padding: 0 4px 0 3px;
    background: #414141;
    border-bottom: 1px solid #151515;
  }

  .strip .icon {
    width: 8px;
    height: 8px;
  }

  .cam {
    display: flex;
    align-items: center;
    gap: 3px;
    height: 10px;
    padding: 0 3px 0 2px;
    background: #0d7a22;
    border-radius: 2px;
  }

  .cam .chev {
    border-color: #041;
  }

  .win-body {
    padding: 7px 7px 5px 6px;
  }

  .chart-tools {
    display: flex;
    gap: 1px;
    margin-bottom: 3px;
  }

  .pair-select {
    display: flex;
    align-items: center;
    gap: 2px;
    height: 12px;
    padding: 0 4px;
    color: #eee;
    background: #3a3a3a;
    border: 1px solid #777;
    border-radius: 2px;
  }

  .chart-tools button {
    display: flex;
    align-items: center;
    justify-content: center;
    gap: 2px;
    min-width: 15px;
    height: 12px;
    background: #333;
    border: 1px solid #666;
    border-radius: 2px;
  }

  .chart-tools .lit {
    width: 20px;
    background: #666;
  }

  .chart-tools .icon {
    width: 9px;
    height: 9px;
  }

  .latest {
    display: grid;
    grid-template-columns: 173px 1fr;
    height: 10px;
    padding: 1px 2px;
    font-size: 5px;
    background: #303030;
  }

  .ptabs {
    display: grid;
    grid-template-columns: 1fr 1fr 1fr;
    height: 12px;
    margin-bottom: 4px;
  }

  .ptabs button {
    text-align: left;
    padding-left: 3px;
    background: #404040;
    border-right: 1px solid #222;
  }

  .ptabs .dark {
    background: #000;
  }

  .prow {
    display: flex;
    gap: 3px;
    height: 15px;
    margin-bottom: 5px;
  }

  .close-all {
    width: 45px;
    background: #08b424;
    color: #063c10;
    font-size: 7px;
  }

  .psel {
    flex: 1;
    display: flex;
    align-items: center;
    padding-right: 4px;
    border: 1px solid #666;
  }

  .psel select {
    flex: 1;
  }

  .ptable th {
    height: 10px;
    text-align: left;
    border-left: 1px solid #555;
    border-bottom: 1px solid #151515;
    padding-left: 1px;
  }

  .ptable th.c0 {
    width: 20px;
    padding-left: 6px;
    border-left: 0;
  }

  .ptable th.c1 {
    width: 169px;
    border-left: 0;
    padding-left: 3px;
  }

  .ptable input {
    appearance: none;
    display: block;
    width: 8px;
    height: 7px;
    background: #555;
    border: 1px solid #777;
  }

  .positions .win-body {
    flex: 1;
    display: flex;
    flex-direction: column;
    padding-bottom: 7px;
  }

  .hbar {
    display: flex;
    align-items: center;
    margin-top: auto;
    padding-left: 22px;
    border-bottom: 1px solid #111;
  }

  .hbar span {
    flex: 1;
    height: 5px;
    background: #12331c;
  }

  .hbar b {
    display: block;
    width: 67%;
    height: 5px;
    background: #087a1c;
  }

  .hbar .tri {
    border-bottom-color: #0a9a24;
  }

  .order {
    position: absolute;
    top: 51px;
    left: 47px;
    width: 140px;
    color: #ccc;
    background: #262626;
    border: 1px solid #1a1a1a;
    box-shadow: 0 0 2px #000;
  }

  .order .win-title {
    height: 12px;
    color: #333;
    padding-left: 1px;
  }

  .strip.black {
    background: #000;
    gap: 3px;
  }

  .form {
    padding: 6px 7px;
    font-family: "Liberation Sans", "Noto Sans CJK JP", sans-serif;
  }

  .pair {
    display: flex;
    align-items: center;
    gap: 3px;
    height: 21px;
    padding: 0 3px;
    border: solid #111;
    border-width: 1px 0;
    color: #fff;
  }

  .pair select {
    flex: 1;
    width: 60px;
    font: 500 10px "Noto Sans", sans-serif;
  }

  .spread {
    margin-left: 8px;
    font-size: 8px;
    color: #ccc;
  }

  .two {
    display: grid;
    grid-template-columns: 1fr 1fr;
    gap: 3px;
  }

  .rates {
    margin: 3px 2px;
  }

  .rate {
    display: block;
    height: 28px;
    border: 1px solid #0c8a28;
    border-radius: 2px;
    color: #fff;
    text-align: left;
  }

  .ask {
    border-color: #c01010;
  }

  .rate .top {
    display: flex;
    align-items: center;
    gap: 3px;
    height: 9px;
    padding-left: 3px;
    font-size: 7px;
    color: #bbb;
  }

  .rate em {
    margin-left: auto;
    width: 30px;
    font-style: normal;
    line-height: 9px;
    text-align: center;
    color: #fff;
    background: #0cb42c;
  }

  .ask em {
    background: #f01414;
  }

  .chev.g {
    border-color: #0cb42c;
  }

  .num {
    display: block;
    padding-left: 5px;
    font-size: 12px;
    line-height: 17px;
  }

  .num b {
    font-weight: normal;
    font-size: 16px;
    margin: 0 1px 0 2px;
  }

  .num sup {
    font-size: 12px;
    line-height: 0;
    vertical-align: 4px;
  }

  .hedge {
    display: flex;
    align-items: center;
    height: 11px;
    padding-right: 4px;
    border: 1px solid #0c5a20;
    border-radius: 2px;
    margin-bottom: 6px;
  }

  .hedge select {
    flex: 1;
    text-align: center;
    text-align-last: center;
  }

  .field {
    display: grid;
    grid-template-columns: 40px 43px 9px 1fr;
    column-gap: 3px;
    align-items: center;
    height: 12px;
    font-size: 7px;
  }

  .field label {
    text-align: right;
  }

  .box {
    display: flex;
    justify-content: flex-end;
    align-items: baseline;
    gap: 1px;
    height: 10px;
    padding-right: 3px;
    border-bottom: 1px solid #888;
    color: #fff;
  }

  .box input {
    width: 24px;
    font-size: 9px;
    line-height: 9px;
    height: 9px;
    text-align: right;
  }

  .spin {
    display: flex;
    flex-direction: column;
    align-items: center;
    justify-content: center;
    gap: 2px;
    height: 10px;
    background: #0a8a20;
  }

  .spin .chev {
    border-color: #031;
  }

  .field small {
    font: 5px/5px "Noto Sans", sans-serif;
    color: #aaa;
  }

  .stats {
    display: grid;
    grid-template-columns: 22px 31px 36px 1fr;
    row-gap: 0;
    margin-top: 3px;
    padding: 1px 2px 3px 0;
    line-height: 10px;
    text-align: right;
    font-size: 7px;
    border: solid #111;
    border-width: 1px 0;
  }

  .stats dd {
    font-size: 8px;
    color: #fff;
  }

  .stats .r, .r {
    color: #f01818;
  }

  .stats .gr, .gr {
    color: #0a9a2a;
  }

  .sum {
    padding: 4px 0;
    line-height: 10px;
    font-size: 7px;
    text-align: center;
    border-bottom: 1px solid #111;
  }

  .sides {
    display: flex;
    justify-content: space-between;
    padding: 0 17px;
  }

  .total {
    text-align: left;
    padding-left: 9px;
  }

  .confirm {
    display: grid;
    grid-template-columns: 1fr 1fr;
    gap: 6px;
    padding-top: 6px;
    font-size: 6px;
  }

  .confirm button {
    display: grid;
    grid-template-columns: 1fr 3px;
    align-items: center;
    height: 15px;
    padding-right: 2px;
    background: #484848;
    border: 1px solid #5a5a5a;
    border-radius: 2px;
    color: #858585;
  }

  .confirm i {
    width: 3px;
    height: 3px;
    border: solid #888;
    border-width: 1px 1px 0 0;
    transform: rotate(45deg);
  }

  .confirm .full {
    grid-column: 1 / 3;
  }

  .chart-tabs {
    height: 13px;
    align-items: flex-start;
    border-top-color: #ddd;
    padding-right: 3px;
  }

  .chart-tabs button {
    height: 10px;
  }

  .chart-tabs .tri {
    margin: 3px 3px 0;
  }

  .terminal {
    display: flex;
    border-top: 1px solid #aaa;
  }

  .rail {
    width: 8px;
    padding-bottom: 2px;
    font-size: 5px;
    line-height: 5px;
  }

  .rail button {
    display: block;
    width: 7px;
    height: 5px;
    line-height: 5px;
  }

  .rail span {
    display: block;
    writing-mode: vertical-rl;
    width: 7px;
    line-height: 7px;
    background: #b8cde4;
  }

  .term-main {
    flex: 1;
  }

  .term-main .tabs button {
    padding: 0 3px;
  }

  .term-main .tabs .on {
    padding: 0 5px;
  }

  .terminal th {
    height: 10px;
    text-align: right;
    background: #fff;
    border-right: 1px solid #eee;
  }

  .terminal th:first-child {
    text-align: left;
    padding-left: 2px;
  }

  .terminal th:last-child, .terminal td:last-child {
    padding-right: 3px;
    text-align: right;
  }

  .terminal td {
    height: 10px;
    font-weight: bold;
    color: #222;
    background: #c4c4c4;
  }

  .dot {
    display: inline-block;
    width: 4px;
    height: 4px;
    margin: 0 3px 0 3px;
    border: 1px solid #888;
    border-radius: 50%;
  }

  .terminal sub {
    font-size: 5px;
    line-height: 0;
    color: #e03020;
    font-weight: bold;
  }

  .status {
    display: flex;
    height: 11px;
    padding-left: 1px;
    line-height: 10px;
    border-top: 1px solid #d0d0d0;
    color: #222;
  }

  .status span {
    flex: 0 1 38px;
    border-right: 1px solid #ddd;
  }

  .status .help {
    flex: 0 1 496px;
  }

  .status .profile {
    flex: 0 1 60px;
    padding-left: 2px;
  }

  .status .net {
    flex: 1;
    display: flex;
    align-items: center;
    gap: 2px;
    padding-left: 38px;
    border: 0;
  }

  .net svg {
    width: 12px;
    height: 7px;
  }
</style>
